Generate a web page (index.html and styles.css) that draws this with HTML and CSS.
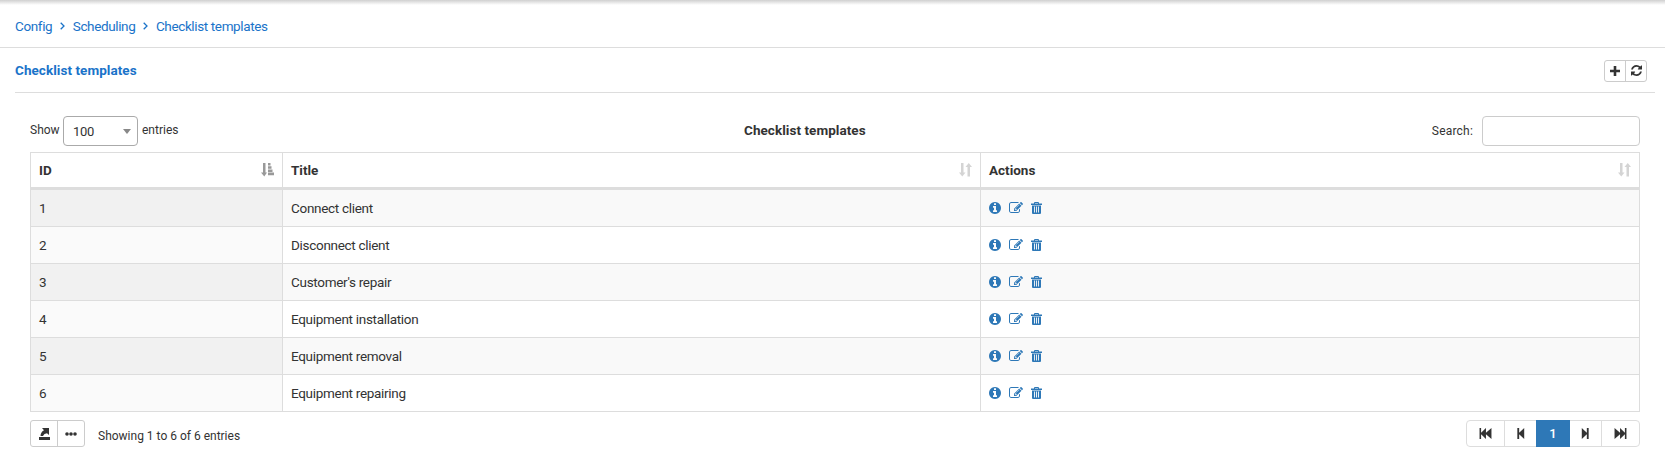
FILE: index.html
```html
<!DOCTYPE html>
<html lang="en">
<head>
<meta charset="utf-8">
<title>Checklist templates</title>
<link rel="stylesheet" href="styles.css">
</head>
<body>
<svg class="sprite" aria-hidden="true">
  <symbol id="info" viewBox="128 128 1536 1536"><path d="M1152 1376v-160q0-14-9-23t-23-9h-96v-512q0-14-9-23t-23-9h-320q-14 0-23 9t-9 23v160q0 14 9 23t23 9h96v320h-96q-14 0-23 9t-9 23v160q0 14 9 23t23 9h448q14 0 23-9t9-23zm-128-896v-160q0-14-9-23t-23-9h-192q-14 0-23 9t-9 23v160q0 14 9 23t23 9h192q14 0 23-9t9-23zm640 416q0 209-103 385.500t-279.500 279.500-385.500 103-385.500-103-279.500-279.500-103-385.500 103-385.500 279.500-279.500 385.500-103 385.500 103 279.500 279.500 103 385.500z"/></symbol>
  <symbol id="edit" viewBox="0 0 1792 1792"><path d="M888 1184l116-116-152-152-116 116v56h96v96h56zm440-720q-16-16-33 1l-350 350q-17 17-1 33t33-1l350-350q17-17 1-33zm80 594v190q0 119-84.500 203.500t-203.500 84.500h-832q-119 0-203.500-84.500t-84.500-203.500v-832q0-119 84.500-203.500t203.500-84.500h832q63 0 117 25 15 7 18 23 3 17-9 29l-49 49q-14 14-32 8-23-6-45-6h-832q-66 0-113 47t-47 113v832q0 66 47 113t113 47h832q66 0 113-47t47-113v-126q0-13 9-22l64-64q15-15 35-7t20 29zm-96-738l288 288-672 672h-288v-288zm444 132l-92 92-288-288 92-92q28-28 68-28t68 28l152 152q28 28 28 68t-28 68z"/></symbol>
  <symbol id="trash" viewBox="0 0 11 12"><path fill-rule="evenodd" d="M3 1.500V1a1 1 0 0 1 1-1h3a1 1 0 0 1 1 1v.5h3V3H0V1.500zM4 1v.5h3V1zM1 3.500h9V11a1 1 0 0 1-1 1H2a1 1 0 0 1-1-1zM3 4.500v6h.9v-6zm2.050 0v6h.9v-6zm2.050 0v6H8v-6z"/></symbol>
  <symbol id="refresh" viewBox="128 128 1536 1536"><path d="M1639 1056q0 5-1 7-64 268-268 434.500t-478 166.500q-146 0-282.500-55t-243.500-157l-129 129q-19 19-45 19t-45-19-19-45v-448q0-26 19-45t45-19h448q26 0 45 19t19 45-19 45l-137 137q71 66 161 102t187 36q134 0 250-65t186-179q11-17 53-117 8-23 30-23h192q13 0 22.500 9.500t9.500 22.500zm25-800v448q0 26-19 45t-45 19h-448q-26 0-45-19t-19-45 19-45l138-138q-148-137-349-137-134 0-250 65t-186 179q-11 17-53 117-8 23-30 23h-199q-13 0-22.500-9.500t-9.500-22.500v-7q65-268 270-434.500t480-166.500q146 0 284 55.500t245 156.500l130-129q19-19 45-19t45 19 19 45z"/></symbol>
  <symbol id="plus" viewBox="0 0 10 10"><path d="M3.700 0h2.600v3.700H10v2.600H6.300V10H3.700V6.300H0V3.700h3.700z"/></symbol>
  <symbol id="sort" viewBox="0 0 13 14"><path d="M2 0h2.500v9.500h2L3.250 13.500 0 9.500h2zM8.500 13.500V4h-2L9.750 0 13 4h-2v9.500z"/></symbol>
  <symbol id="sort-asc" viewBox="0 0 13 14"><path d="M2 0h2.500v9.500H6L3.250 13.500 0 9.500h2zM7 0h2.500v2.500H7zM7 3.200h3.500v2.500H7zM7 6.400h4.500v2.500H7zM7 9.600h6v2.600H7z"/></symbol>
  <symbol id="export" viewBox="0 0 11 12"><path d="M0 9h11v3H0zM3 0h7v7L8 5.200Q5 5.500 4 8H1.500Q1.500 4.200 5 2.200z"/></symbol>
  <symbol id="dots" viewBox="0 0 12 4"><circle cx="2" cy="2" r="1.800"/><circle cx="6" cy="2" r="1.800"/><circle cx="10" cy="2" r="1.800"/></symbol>
  <symbol id="first" viewBox="0 0 13 12"><path d="M0 0h1.700v5.300L7 0v5.300L13 0v12L7 6.700V12L1.700 6.700V12H0z"/></symbol>
  <symbol id="prev" viewBox="0 0 8 12"><path d="M0 0h2v5.300L7.500 0v12L2 6.700V12H0z"/></symbol>
</svg>
<nav class="breadcrumb">
  <a>Config</a><svg class="chevron" viewBox="0 0 5 8"><path d="M.7.700 4 4 .7 7.300"/></svg><a>Scheduling</a><svg class="chevron" viewBox="0 0 5 8"><path d="M.7.700 4 4 .7 7.300"/></svg><a>Checklist templates</a>
</nav>
<main>
  <header class="panel-head">
    <h1>Checklist templates</h1>
    <div class="group head-tools">
      <button aria-label="Add"><svg class="i-plus"><use href="#plus"/></svg></button>
      <button aria-label="Refresh"><svg class="i-refresh"><use href="#refresh"/></svg></button>
    </div>
  </header>
  <section class="content">
    <div class="controls">
      <div class="length"><span>Show</span><div class="select"><span>100</span><i class="caret"></i></div><span>entries</span></div>
      <strong>Checklist templates</strong>
      <label class="search"><span>Search:</span><input type="text"></label>
    </div>
    <table>
      <colgroup><col class="c1"><col class="c2"><col class="c3"></colgroup>
      <thead><tr>
        <th><div class="th">ID<svg class="i-asc"><use href="#sort-asc"/></svg></div></th>
        <th><div class="th">Title<svg class="i-sort"><use href="#sort"/></svg></div></th>
        <th><div class="th">Actions<svg class="i-sort"><use href="#sort"/></svg></div></th>
      </tr></thead>
      <tbody>
        <tr><td>1</td><td>Connect client</td><td><div class="actions"><svg class="i-info"><use href="#info"/></svg><svg class="i-edit"><use href="#edit"/></svg><svg class="i-trash"><use href="#trash"/></svg></div></td></tr>
        <tr><td>2</td><td>Disconnect client</td><td><div class="actions"><svg class="i-info"><use href="#info"/></svg><svg class="i-edit"><use href="#edit"/></svg><svg class="i-trash"><use href="#trash"/></svg></div></td></tr>
        <tr><td>3</td><td>Customer's repair</td><td><div class="actions"><svg class="i-info"><use href="#info"/></svg><svg class="i-edit"><use href="#edit"/></svg><svg class="i-trash"><use href="#trash"/></svg></div></td></tr>
        <tr><td>4</td><td>Equipment installation</td><td><div class="actions"><svg class="i-info"><use href="#info"/></svg><svg class="i-edit"><use href="#edit"/></svg><svg class="i-trash"><use href="#trash"/></svg></div></td></tr>
        <tr><td>5</td><td>Equipment removal</td><td><div class="actions"><svg class="i-info"><use href="#info"/></svg><svg class="i-edit"><use href="#edit"/></svg><svg class="i-trash"><use href="#trash"/></svg></div></td></tr>
        <tr><td>6</td><td>Equipment repairing</td><td><div class="actions"><svg class="i-info"><use href="#info"/></svg><svg class="i-edit"><use href="#edit"/></svg><svg class="i-trash"><use href="#trash"/></svg></div></td></tr>
      </tbody>
    </table>
    <footer class="foot">
      <div class="group foot-tools">
        <button aria-label="Export"><svg class="i-export"><use href="#export"/></svg></button>
        <button aria-label="More"><svg class="i-dots"><use href="#dots"/></svg></button>
      </div>
      <span class="summary">Showing 1 to 6 of 6 entries</span>
      <div class="pager">
        <span class="page end"><svg class="i-first"><use href="#first"/></svg></span>
        <span class="page step"><svg class="i-prev"><use href="#prev"/></svg></span>
        <span class="page current">1</span>
        <span class="page step next"><svg class="i-prev flip"><use href="#prev"/></svg></span>
        <span class="page end"><svg class="i-first flip"><use href="#first"/></svg></span>
      </div>
    </footer>
  </section>
</main>
</body>
</html>
```
FILE: styles.css
```css
* { box-sizing: border-box; }
body { margin: 0; background: #fff; color: #333; font: 13px/18px Roboto, sans-serif; }
svg { display: block; flex: none; fill: currentColor; }
.sprite { display: none; }
.breadcrumb { display: flex; align-items: center; height: 48px; padding: 5px 15px 0; color: #1a73c9; font-size: 13.500px; letter-spacing: -.37px; border-bottom: 1px solid #ddd; background: linear-gradient(#d0d0d0, #fff 5px); }
.chevron { width: 5px; height: 8px; margin: 0 8px 1px 7.500px; fill: none; stroke: currentColor; stroke-width: 1.300; }
main { padding: 0 10px 0 15px; }
.panel-head { display: flex; justify-content: space-between; align-items: center; height: 45px; padding-right: 8px; border-bottom: 1px solid #ddd; }
h1 { margin: 0; padding-bottom: 1px; font-size: 13.500px; line-height: 18px; font-weight: 700; letter-spacing: .05px; color: #1a73c9; }
.group { display: flex; border: 1px solid #ccc; border-radius: 3px; }
button { display: flex; align-items: center; justify-content: center; padding: 0; border: 0; background: none; color: #333; }
button + button { border-left: 1px solid #ccc; }
.head-tools { width: 43px; height: 22px; margin-top: 1px; }
.head-tools button { width: 21px; }
.i-plus { width: 10px; height: 10px; }
.i-refresh { width: 11px; height: 11px; }
.content { padding: 23px 15px 0; }
.controls { display: grid; grid-template-columns: 714px auto 1fr; height: 36px; font-size: 12px; }
.length { display: flex; gap: 4px; }
.length > span { padding-top: 5px; }
.length > span:first-child { width: 29px; }
.controls strong { padding-top: 5px; font-size: 13.500px; font-weight: 700; letter-spacing: .05px; }
.select { display: flex; align-items: center; justify-content: space-between; width: 75px; height: 30px; padding: 1px 6px 0 9px; font-size: 13px; letter-spacing: -.3px; border: 1px solid #aaa; border-radius: 4px; }
.caret { border: 4px solid transparent; border-top: 5px solid #888; border-bottom: 0; }
.search { display: flex; justify-content: flex-end; gap: 9px; letter-spacing: .2px; }
.search span { padding-top: 6px; }
.search input { width: 158px; height: 30px; padding: 0 8px; border: 1px solid #ccc; border-radius: 4px; }
table { width: 1610px; table-layout: fixed; border-spacing: 0; font-size: 13.500px; letter-spacing: -.3px; }
.c1 { width: 252px; }
.c2 { width: 698px; }
th, td { padding: 0 8px; text-align: left; border-left: 1px solid #ddd; }
th:last-child, td:last-child { border-right: 1px solid #ddd; }
th { height: 38px; padding-bottom: 1px; font-weight: 700; letter-spacing: 0; border-top: 1px solid #ddd; border-bottom: 3px solid #ddd; }
td { height: 37px; border-bottom: 1px solid #ddd; }
tbody tr:nth-child(odd) { background: #f9f9f9; }
tbody td:first-child { background: #fafafa; }
tbody tr:nth-child(odd) td:first-child { background: #f1f1f1; }
.th { display: flex; align-items: center; justify-content: space-between; }
.i-asc { width: 13px; height: 14px; color: #999; }
.i-sort { width: 13px; height: 14px; color: #d4d4d4; }
.actions { display: flex; align-items: center; color: #2e78b7; }
.i-info { width: 12px; height: 12px; }
.i-edit { width: 14px; height: 14px; margin: 0 8px; }
.i-trash { width: 11px; height: 12px; }
.foot { display: flex; padding-top: 8px; }
.foot-tools { width: 55px; height: 27px; }
.foot-tools button { width: 26px; }
.foot-tools button + button { width: 27px; }
.i-export { width: 11px; height: 12px; }
.i-dots { width: 12px; height: 4px; }
.summary { padding: 7px 0 0 13px; font-size: 12px; }
.pager { display: flex; width: 174px; height: 27px; margin-left: auto; border: 1px solid #ddd; border-radius: 4px; }
.page { display: flex; align-items: center; justify-content: center; }
.end { width: 37px; }
.step { width: 32px; border-left: 1px solid #ddd; }
.next { border-left: 0; border-right: 1px solid #ddd; padding-right: 1px; }
.current { width: 34px; margin: -1px 0; color: #fff; background: #2e78b7; font-weight: 500; }
.i-first { width: 13px; height: 11px; }
.i-prev { width: 8px; height: 11px; }
.flip { transform: scaleX(-1); }
```
